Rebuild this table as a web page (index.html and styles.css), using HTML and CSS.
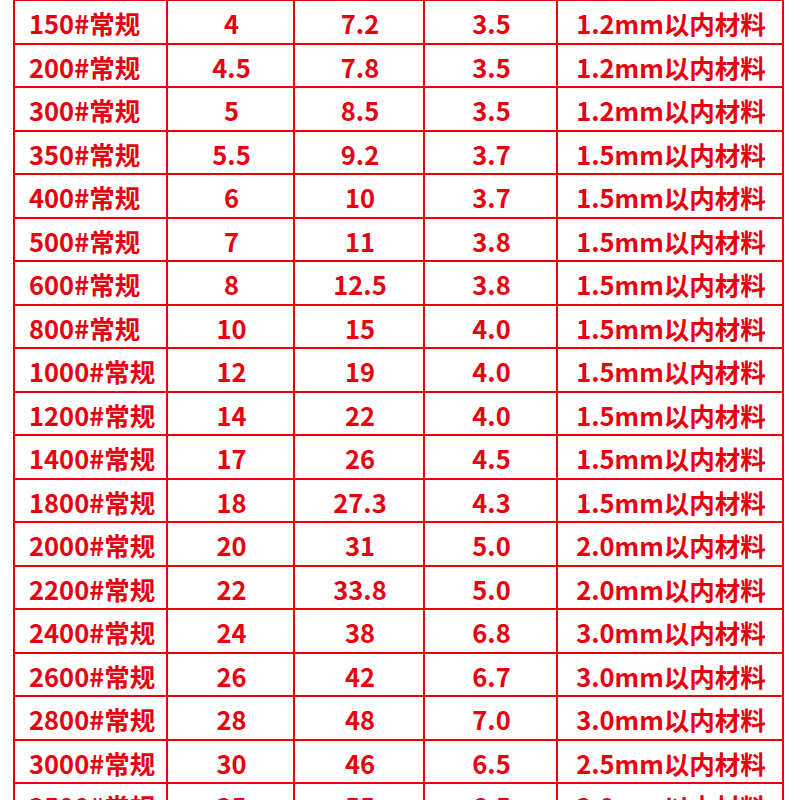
FILE: index.html
```html
<!DOCTYPE html>
<html lang="zh-CN">
<head>
<meta charset="utf-8">
<title>规格表</title>
<link rel="stylesheet" href="styles.css">
</head>
<body>
<div class="sheet">
  <div class="cell name">150#常规</div><div class="cell">4</div><div class="cell">7.2</div><div class="cell">3.5</div><div class="cell">1.2mm以内材料</div>
  <div class="cell name">200#常规</div><div class="cell">4.5</div><div class="cell">7.8</div><div class="cell">3.5</div><div class="cell">1.2mm以内材料</div>
  <div class="cell name">300#常规</div><div class="cell">5</div><div class="cell">8.5</div><div class="cell">3.5</div><div class="cell">1.2mm以内材料</div>
  <div class="cell name">350#常规</div><div class="cell">5.5</div><div class="cell">9.2</div><div class="cell">3.7</div><div class="cell">1.5mm以内材料</div>
  <div class="cell name">400#常规</div><div class="cell">6</div><div class="cell">10</div><div class="cell">3.7</div><div class="cell">1.5mm以内材料</div>
  <div class="cell name">500#常规</div><div class="cell">7</div><div class="cell">11</div><div class="cell">3.8</div><div class="cell">1.5mm以内材料</div>
  <div class="cell name">600#常规</div><div class="cell">8</div><div class="cell">12.5</div><div class="cell">3.8</div><div class="cell">1.5mm以内材料</div>
  <div class="cell name">800#常规</div><div class="cell">10</div><div class="cell">15</div><div class="cell">4.0</div><div class="cell">1.5mm以内材料</div>
  <div class="cell name">1000#常规</div><div class="cell">12</div><div class="cell">19</div><div class="cell">4.0</div><div class="cell">1.5mm以内材料</div>
  <div class="cell name">1200#常规</div><div class="cell">14</div><div class="cell">22</div><div class="cell">4.0</div><div class="cell">1.5mm以内材料</div>
  <div class="cell name">1400#常规</div><div class="cell">17</div><div class="cell">26</div><div class="cell">4.5</div><div class="cell">1.5mm以内材料</div>
  <div class="cell name">1800#常规</div><div class="cell">18</div><div class="cell">27.3</div><div class="cell">4.3</div><div class="cell">1.5mm以内材料</div>
  <div class="cell name">2000#常规</div><div class="cell">20</div><div class="cell">31</div><div class="cell">5.0</div><div class="cell">2.0mm以内材料</div>
  <div class="cell name">2200#常规</div><div class="cell">22</div><div class="cell">33.8</div><div class="cell">5.0</div><div class="cell">2.0mm以内材料</div>
  <div class="cell name">2400#常规</div><div class="cell">24</div><div class="cell">38</div><div class="cell">6.8</div><div class="cell">3.0mm以内材料</div>
  <div class="cell name">2600#常规</div><div class="cell">26</div><div class="cell">42</div><div class="cell">6.7</div><div class="cell">3.0mm以内材料</div>
  <div class="cell name">2800#常规</div><div class="cell">28</div><div class="cell">48</div><div class="cell">7.0</div><div class="cell">3.0mm以内材料</div>
  <div class="cell name">3000#常规</div><div class="cell">30</div><div class="cell">46</div><div class="cell">6.5</div><div class="cell">2.5mm以内材料</div>
  <div class="cell name">3500#常规</div><div class="cell">35</div><div class="cell">55</div><div class="cell">6.5</div><div class="cell">3.0mm以内材料</div>
</div>
</body>
</html>
```
FILE: styles.css
```css
html, body {
  margin: 0;
  padding: 0;
  background: #ffffff;
}
body {
  width: 800px;
  height: 800px;
  overflow: hidden;
}
.sheet {
  margin: -1px 0 0 13px;
  width: 767px;
  padding: 2px;
  background: #f00000;
  display: grid;
  grid-template-columns: 151px 125px 128px 131px 224px;
  grid-auto-rows: 41.5px;
  gap: 2px;
}
.cell {
  background: #ffffff;
  color: #e8000e;
  font-family: "Noto Sans CJK SC", "Noto Sans", sans-serif;
  font-weight: 700;
  font-size: 25.5px;
  line-height: 1;
  padding: 2px 0 0 2px;
  display: flex;
  align-items: center;
  justify-content: center;
  white-space: nowrap;
}
.name {
  justify-content: flex-start;
  padding-left: 14px;
}
```
